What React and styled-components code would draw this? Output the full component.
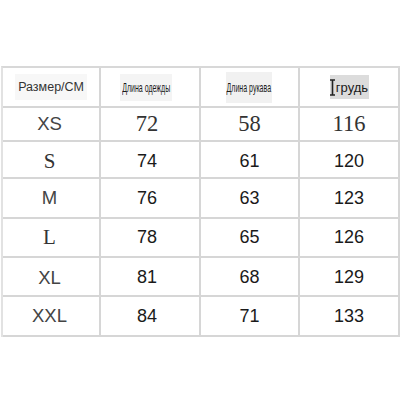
import React from "react";
import styled, { createGlobalStyle } from "styled-components";

const Global = createGlobalStyle`
  html, body { margin: 0; padding: 0; background: #ffffff; }
  body { font-family: "Liberation Sans", Arial, sans-serif; }
`;

const Page = styled.div`
  width: 400px;
  height: 400px;
  box-sizing: border-box;
  padding: 66px 0 0 1px;
  background: #fff;
`;

const Table = styled.div`
  display: grid;
  grid-template-columns: 98px 100px 99px 100px;
  grid-template-rows: 40px 34px 37px 40px 39px 39px 40px;
  border-top: 2px solid #d8d8d8;
  border-left: 2px solid #e2e2e2;
  width: max-content;
`;

const Cell = styled.div`
  display: flex;
  align-items: center;
  justify-content: center;
  border-right: 2px solid #d6d6d6;
  border-bottom: 2px solid #d6d6d6;
  padding-top: ${(p) => p.$dy || 0}px;
  padding-right: ${(p) => p.$dx || 0}px;
  box-sizing: border-box;
`;

const HeadPlain = styled.span`
  font-family: "Liberation Sans", Arial, sans-serif;
  font-size: 12.5px;
  color: #333;
  background: #f7f7f7;
  padding: 6px 3px;
`;

const HeadBox = styled.span`
  display: inline-flex;
  align-items: center;
  justify-content: center;
  width: ${(p) => p.$w}px;
  height: ${(p) => p.$h}px;
  background: ${(p) => p.$bg};
  overflow: visible;
`;

const Narrow = styled.span`
  display: inline-block;
  font-family: "Liberation Sans", Arial, sans-serif;
  font-size: 13.5px;
  color: #1a1a1a;
  white-space: nowrap;
  transform: scaleX(0.52);
`;

const Chest = styled.span`
  display: inline-flex;
  align-items: center;
  gap: 1px;
  font-family: "Liberation Sans", Arial, sans-serif;
  font-size: 13px;
  color: #1a1a1a;
`;

const Size = styled.span`
  font-family: ${(p) =>
    p.$serif
      ? `"Liberation Serif", "Times New Roman", serif`
      : `"Liberation Sans", Arial, sans-serif`};
  font-size: ${(p) => (p.$serif ? 21 : 18.5)}px;
  color: ${(p) => (p.$serif ? "#333" : "#444")};
`;

const Num = styled.span`
  font-family: ${(p) =>
    p.$serif
      ? `"Liberation Serif", "Times New Roman", serif`
      : `"Liberation Sans", Arial, sans-serif`};
  font-size: ${(p) => (p.$serif ? 22.5 : 18)}px;
  color: ${(p) => (p.$serif ? "#333" : "#1a1a1a")};
`;

const Cursor = () => (
  <svg width="5" height="17" viewBox="0 0 5 17" aria-hidden="true">
    <path d="M0 1h5M0 16h5M2.5 1v15" stroke="#222" strokeWidth="1.6" fill="none" />
  </svg>
);

const rows = [
  { size: "XS", sizeSerif: false, vals: ["72", "58", "116"], valSerif: true, dy: 0 },
  { size: "S", sizeSerif: true, vals: ["74", "61", "120"], valSerif: false, dy: 3 },
  { size: "M", sizeSerif: false, vals: ["76", "63", "123"], valSerif: false, dy: 0 },
  { size: "L", sizeSerif: true, vals: ["78", "65", "126"], valSerif: false, dy: 0 },
  { size: "XL", sizeSerif: false, vals: ["81", "68", "129"], valSerif: false, dy: 2 },
  { size: "XXL", sizeSerif: false, vals: ["84", "71", "133"], valSerif: false, dy: 0 },
];

export default function App() {
  return (
    <Page>
      <Global />
      <Table>
        <Cell>
          <HeadPlain>Размер/СМ</HeadPlain>
        </Cell>
        <Cell $dx={8}>
          <HeadBox $w={52} $h={27} $bg="#f4f4f4">
            <Narrow>Длина одежды</Narrow>
          </HeadBox>
        </Cell>
        <Cell $dx={2}>
          <HeadBox $w={46} $h={31} $bg="#f1f1f1">
            <Narrow>Длина рукава</Narrow>
          </HeadBox>
        </Cell>
        <Cell>
          <HeadBox $w={39} $h={24} $bg="#dcdcdc">
            <Chest>
              <Cursor />
              грудь
            </Chest>
          </HeadBox>
        </Cell>
        {rows.map((r) => (
          <React.Fragment key={r.size}>
            <Cell $dy={r.dy} $dx={3}>
              <Size $serif={r.sizeSerif}>{r.size}</Size>
            </Cell>
            {r.vals.map((v, i) => (
              <Cell key={i} $dy={r.dy} $dx={i === 0 ? 6 : 0}>
                <Num $serif={r.valSerif}>{v}</Num>
              </Cell>
            ))}
          </React.Fragment>
        ))}
      </Table>
    </Page>
  );
}
